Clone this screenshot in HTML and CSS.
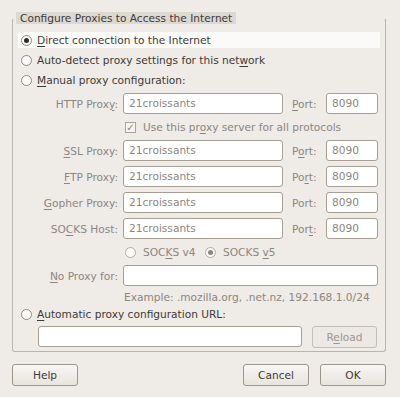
FILE: index.html
```html
<!DOCTYPE html>
<html lang="en">
<head>
    <meta charset="UTF-8">
    <title>Connection Settings</title>
    <link rel="stylesheet" href="styles.css">
</head>
<body>
    <div class="dialog">
        <fieldset class="frame">
            <legend>Configure Proxies to Access the Internet</legend>

            <div class="choice selected">
                <span class="radio on"></span>
                <span><u>D</u>irect connection to the Internet</span>
            </div>
            <div class="choice">
                <span class="radio"></span>
                <span>Auto-detect proxy settings for this net<u>w</u>ork</span>
            </div>
            <div class="choice">
                <span class="radio"></span>
                <span><u>M</u>anual proxy configuration:</span>
            </div>

            <div class="manual">
                <label class="name">HTTP Prox<u>y</u>:</label>
                <div class="field">21croissants</div>
                <label class="port-name"><u>P</u>ort:</label>
                <div class="field">8090</div>

                <div class="check-row">
                    <span class="check">&#10003;</span>
                    <span>Use this pr<u>o</u>xy server for all protocols</span>
                </div>

                <label class="name"><u>S</u>SL Proxy:</label>
                <div class="field">21croissants</div>
                <label class="port-name">P<u>o</u>rt:</label>
                <div class="field">8090</div>

                <label class="name"><u>F</u>TP Proxy:</label>
                <div class="field">21croissants</div>
                <label class="port-name">Po<u>r</u>t:</label>
                <div class="field">8090</div>

                <label class="name"><u>G</u>opher Proxy:</label>
                <div class="field">21croissants</div>
                <label class="port-name">Port:</label>
                <div class="field">8090</div>

                <label class="name">SO<u>C</u>KS Host:</label>
                <div class="field">21croissants</div>
                <label class="port-name">Por<u>t</u>:</label>
                <div class="field">8090</div>

                <div class="socks-row">
                    <span class="socks"><span class="radio"></span><span>SOC<u>K</u>S v4</span></span>
                    <span class="socks"><span class="radio on"></span><span>SOCKS <u>v</u>5</span></span>
                </div>

                <label class="name"><u>N</u>o Proxy for:</label>
                <div class="field wide"></div>

                <div class="example">Example: .mozilla.org, .net.nz, 192.168.1.0/24</div>
            </div>

            <div class="choice auto">
                <span class="radio"></span>
                <span><u>A</u>utomatic proxy configuration URL:</span>
            </div>
            <div class="url-row">
                <div class="field url"></div>
                <div class="button disabled">R<u>e</u>load</div>
            </div>
        </fieldset>

        <div class="buttons">
            <div class="button">Help</div>
            <div class="spacer"></div>
            <div class="button">Cancel</div>
            <div class="button">OK</div>
        </div>
    </div>
</body>
</html>
```

FILE: styles.css
```css
body {
    margin: 0;
    background-color: #efebe7;
    color: #3c3a37;
    font-family: "DejaVu Sans", sans-serif;
    font-size: 10.6px;
}

u {
    text-decoration: underline;
    text-underline-offset: 2px;
}

.dialog {
    padding: 12px 14px 0 12px;
}

.frame {
    margin: 0;
    padding: 0 0 4px 0;
    border: 1px solid #b9b4ad;
    border-top-color: transparent;
    border-radius: 3px;
    height: 340px;
    box-sizing: border-box;
    min-width: 0;
}

.frame legend {
    margin-left: 3px;
    padding: 0 4px 0 4px;
    height: 12px;
    line-height: 12px;
    background-color: #dcd8d2;
}

.choice {
    display: flex;
    align-items: center;
    height: 16px;
    margin: 4px 5px 0 5px;
    padding-left: 3px;
}

.choice.selected {
    margin-top: 8px;
    background-color: #fbfaf9;
}

.choice .radio {
    margin-right: 5px;
}

.radio {
    display: inline-block;
    width: 9px;
    height: 9px;
    border: 1px solid #8e8982;
    border-radius: 50%;
    background-color: #fbfaf9;
    position: relative;
    flex: none;
}

.radio.on::after {
    content: "";
    position: absolute;
    left: 2px;
    top: 2px;
    width: 5px;
    height: 5px;
    border-radius: 50%;
    background-color: #2e2c29;
}

.manual {
    display: grid;
    grid-template-columns: 110px 160px 43px 52px;
    row-gap: 5px;
    margin-top: 5px;
    color: #8b877f;
    align-items: center;
}

.name {
    text-align: right;
    padding-right: 5px;
}

.port-name {
    padding-left: 9px;
}

.field {
    height: 21px;
    box-sizing: border-box;
    border: 1px solid #a79e94;
    border-radius: 3px;
    background-color: #fff;
    padding: 0 5px;
    line-height: 19px;
    color: #8b877f;
}

.field.wide {
    grid-column: 2 / 5;
}

.check-row {
    grid-column: 2 / 5;
    display: flex;
    align-items: center;
    height: 16px;
    padding-left: 2px;
}

.check {
    width: 9px;
    height: 9px;
    border: 1px solid #aaa49c;
    background-color: #f6f4f1;
    margin-right: 7px;
    font-size: 10px;
    line-height: 9px;
    text-align: center;
    color: #8b877f;
}

.socks-row {
    grid-column: 2 / 5;
    display: flex;
    height: 16px;
    align-items: center;
    padding-left: 2px;
}

.socks {
    display: flex;
    align-items: center;
    width: 80px;
}

.socks .radio {
    margin-right: 7px;
    border-color: #b1aca5;
}

.socks .radio.on::after {
    background-color: #8b877f;
}

.example {
    grid-column: 2 / 5;
    padding-left: 1px;
    margin-top: -1px;
    height: 14px;
    line-height: 14px;
}

.choice.auto {
    margin-top: 2px;
}

.url-row {
    display: flex;
    gap: 10px;
    margin: 4px 0 0 25px;
}

.field.url {
    width: 264px;
}

.button {
    width: 65px;
    height: 22px;
    box-sizing: border-box;
    border: 1px solid #9c958c;
    border-radius: 3px;
    background: linear-gradient(#f8f6f3, #e8e4de);
    text-align: center;
    line-height: 20px;
    color: #3c3a37;
}

.button.disabled {
    border-color: #c2bdb6;
    background: #ece8e3;
    color: #9c978f;
}

.buttons {
    display: flex;
    gap: 11px;
    margin-top: 12px;
}

.buttons .button {
    width: 66px;
}

.spacer {
    flex: 1;
}
```
